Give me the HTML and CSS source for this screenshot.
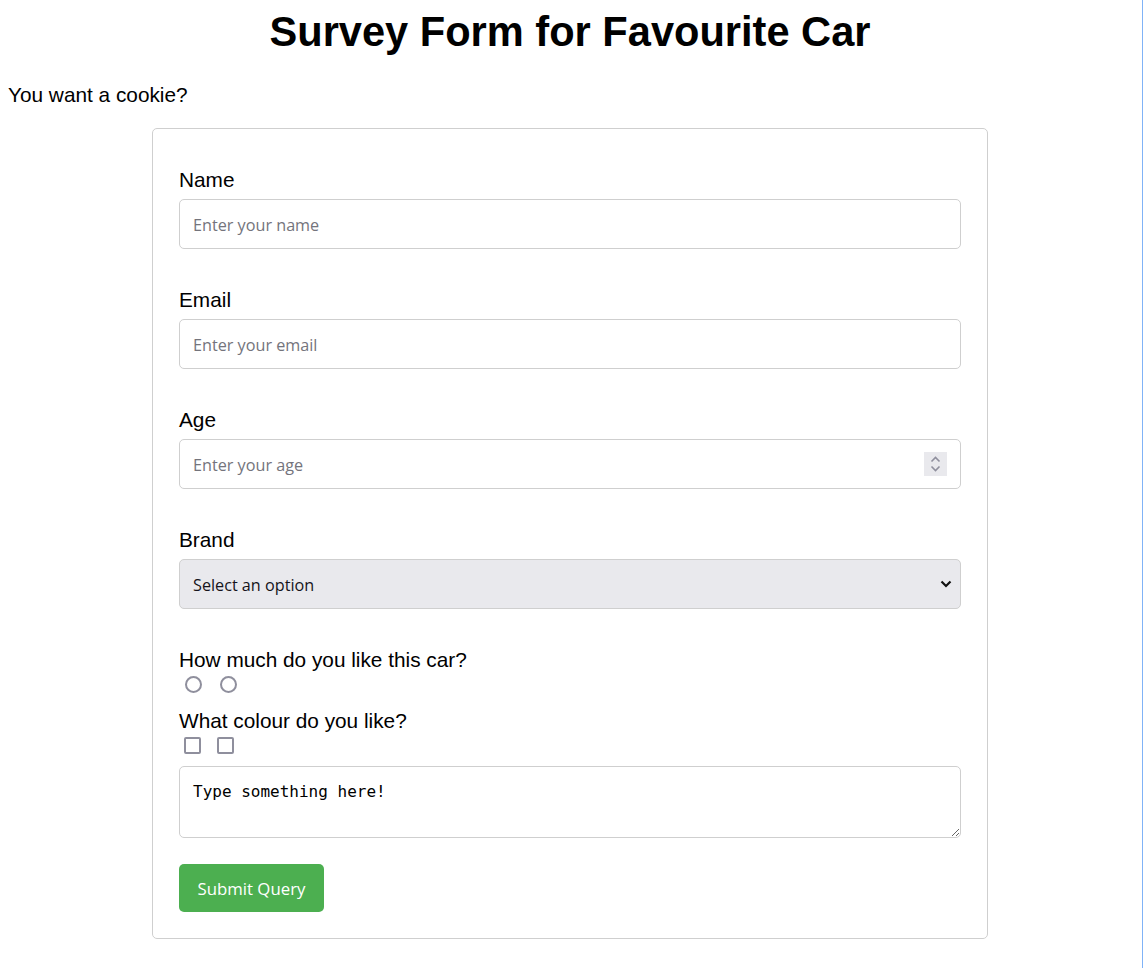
FILE: index.html
```html
<!DOCTYPE html>
<html lang="en">
<head>
<meta charset="utf-8">
<title>Survey Form for Favourite Car</title>
<link rel="stylesheet" href="styles.css">
</head>
<body>
<h1 class="title">Survey Form for Favourite Car</h1>
<p class="intro">You want a cookie?</p>
<form class="card">
  <div class="field">
    <label class="label" for="name">Name</label>
    <input class="control" id="name" type="text" placeholder="Enter your name">
  </div>
  <div class="field">
    <label class="label" for="email">Email</label>
    <input class="control" id="email" type="email" placeholder="Enter your email">
  </div>
  <div class="field">
    <label class="label" for="age">Age</label>
    <div class="control-wrap">
      <input class="control" id="age" type="text" placeholder="Enter your age">
      <span class="spinner">
        <svg width="23" height="24" viewBox="0 0 23 24"><path d="M7.5 9.5 L11.5 5.5 L15.5 9.5" fill="none" stroke="#8f8f9d" stroke-width="1.6"/><path d="M7.5 14.5 L11.5 18.5 L15.5 14.5" fill="none" stroke="#8f8f9d" stroke-width="1.6"/></svg>
      </span>
    </div>
  </div>
  <div class="field">
    <label class="label" for="brand">Brand</label>
    <div class="control-wrap">
      <select class="control select" id="brand">
        <option>Select an option</option>
      </select>
      <svg class="chevron" width="12" height="8" viewBox="0 0 12 8"><path d="M1.5 1.5 L6 6 L10.5 1.5" fill="none" stroke="#111" stroke-width="2.2"/></svg>
    </div>
  </div>
  <div class="question">
    <p class="label">How much do you like this car?</p>
    <div class="choices choices-radio">
      <input class="radio" type="radio" name="like">
      <input class="radio" type="radio" name="like">
    </div>
  </div>
  <div class="question">
    <p class="label">What colour do you like?</p>
    <div class="choices choices-check">
      <input class="check" type="checkbox">
      <input class="check" type="checkbox">
    </div>
  </div>
  <textarea class="textarea">Type something here!</textarea>
  <button class="submit" type="button">Submit Query</button>
</form>
</body>
</html>
```

FILE: styles.css
```css
html {
  min-height: 100%;
  box-sizing: border-box;
  border-right: 1px solid #80b3f7;
}

body {
  margin: 8px 10px 8px 8px;
  font-family: "Liberation Sans", Arial, sans-serif;
  color: #000;
  background: #fff;
}

.title {
  margin: 0 0 27px;
  font-size: 41.6px;
  font-weight: bold;
  text-align: center;
  line-height: normal;
}

.intro {
  margin: 0 0 21px;
  font-size: 20.8px;
  line-height: 24px;
}

.card {
  width: 836px;
  box-sizing: border-box;
  margin: 0 auto;
  padding: 39px 26px 26px;
  border: 1px solid #cfcfcf;
  border-radius: 5px;
}

.field {
  margin-bottom: 39px;
}

.label {
  display: block;
  margin: 0 0 7px;
  font-size: 20.8px;
  line-height: 24px;
}

.control-wrap {
  position: relative;
}

.control {
  display: block;
  width: 100%;
  height: 50px;
  box-sizing: border-box;
  margin: 0;
  padding: 1px 13px 0;
  border: 1px solid #cfcfcf;
  border-radius: 5px;
  background: #fff;
  font-family: "Open Sans", "Noto Sans", sans-serif;
  font-size: 16.2px;
  color: #000;
  outline: none;
}

.control::placeholder {
  color: #74747c;
  opacity: 1;
}

.spinner {
  position: absolute;
  right: 14px;
  top: 13px;
  width: 23px;
  height: 24px;
  background: #e9e9ed;
  display: flex;
}

.select {
  appearance: none;
  -webkit-appearance: none;
  background: #e9e9ed;
  color: #15141a;
  padding-left: 13px;
}

.chevron {
  position: absolute;
  right: 9px;
  top: 21px;
}

.question .label {
  margin-bottom: 4px;
}

.question {
  margin-bottom: 16px;
}

.question:last-of-type {
  margin-bottom: 12px;
}

.choices {
  display: flex;
  align-items: center;
}

.radio,
.check {
  appearance: none;
  -webkit-appearance: none;
  margin: 0;
  width: 17px;
  height: 17px;
  box-sizing: border-box;
  border: 2px solid #8f8f9d;
  background: #fff;
}

.radio {
  border-radius: 50%;
}

.check {
  border-radius: 2px;
}

.choices-radio {
  gap: 18px;
  padding-left: 6px;
}

.choices-check {
  gap: 16px;
  padding-left: 5px;
}

.textarea {
  display: block;
  width: 100%;
  height: 72px;
  box-sizing: border-box;
  margin: 0 0 26px;
  padding: 15px 13px 13px;
  border: 1px solid #cfcfcf;
  border-radius: 5px;
  font-family: "DejaVu Sans Mono", monospace;
  font-size: 16px;
  color: #000;
  resize: vertical;
  outline: none;
}

.submit {
  display: block;
  height: 48px;
  padding: 0 18.5px;
  border: none;
  border-radius: 5px;
  background: #4caf50;
  color: #fff;
  font-family: "Open Sans", "Noto Sans", sans-serif;
  font-size: 16.8px;
}
```
